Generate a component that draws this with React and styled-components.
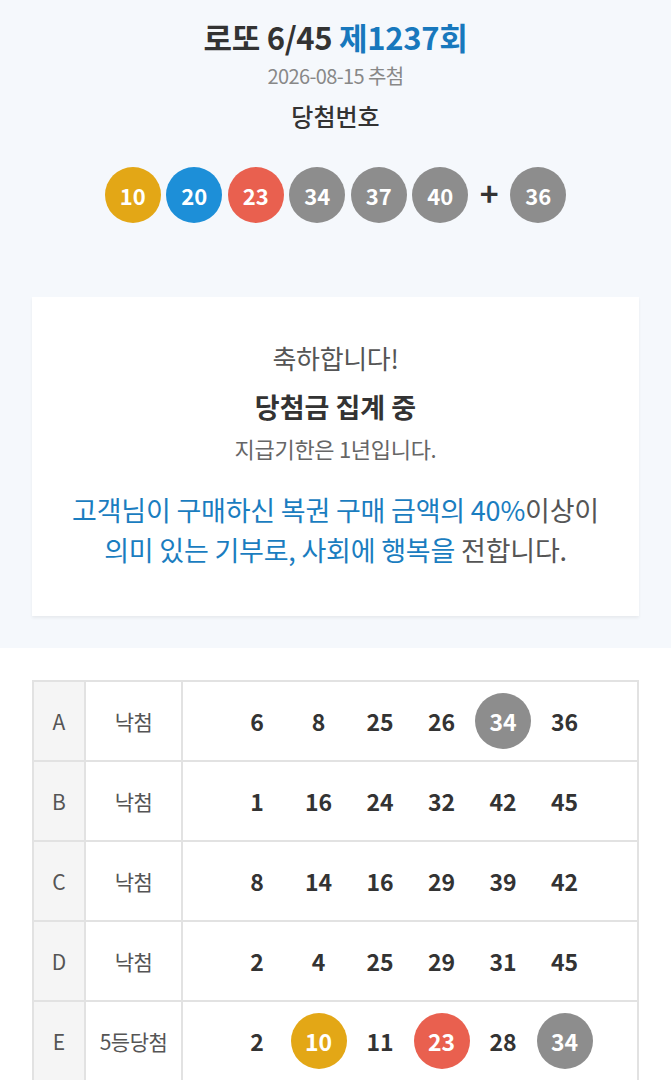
import React from 'react';
import styled, { createGlobalStyle } from 'styled-components';

const GlobalStyle = createGlobalStyle`
  html, body {
    margin: 0;
    padding: 0;
    background: #ffffff;
    font-family: 'Noto Sans CJK KR', 'Noto Sans', sans-serif;
    color: #333;
  }
`;

const winning = [10, 20, 23, 34, 37, 40];
const bonus = 36;

const games = [
  { id: 'A', result: '낙첨', nums: [6, 8, 25, 26, 34, 36] },
  { id: 'B', result: '낙첨', nums: [1, 16, 24, 32, 42, 45] },
  { id: 'C', result: '낙첨', nums: [8, 14, 16, 29, 39, 42] },
  { id: 'D', result: '낙첨', nums: [2, 4, 25, 29, 31, 45] },
  { id: 'E', result: '5등당첨', nums: [2, 10, 11, 23, 28, 34] }
];

const ballColor = n => {
  if (n <= 10) return '#e3a716';
  if (n <= 20) return '#1d8fd8';
  if (n <= 30) return '#e9604f';
  if (n <= 40) return '#8d8d8d';
  return '#9ac23c';
};

const App = () => (
  <Page>
    <GlobalStyle />
    <Top>
      <Title>
        로또 6/45 <Round>제1237회</Round>
      </Title>
      <DrawDate>2026-08-15 추첨</DrawDate>
      <Label>당첨번호</Label>
      <Balls>
        {winning.map(n => (
          <Ball key={n} color={ballColor(n)}>
            {n}
          </Ball>
        ))}
        <Plus>+</Plus>
        <Ball color={ballColor(bonus)}>{bonus}</Ball>
      </Balls>
      <Card>
        <Congrats>축하합니다!</Congrats>
        <Prize>당첨금 집계 중</Prize>
        <Deadline>지급기한은 1년입니다.</Deadline>
        <Donation>
          <Blue>고객님이 구매하신 복권 구매 금액의 40%</Blue>이상이
          <br />
          <Blue>의미 있는 기부로, 사회에 행복을</Blue> 전합니다.
        </Donation>
      </Card>
    </Top>
    <Bottom>
      <Table>
        {games.map(g => (
          <Row key={g.id}>
            <IdCell>{g.id}</IdCell>
            <ResultCell>{g.result}</ResultCell>
            <NumsCell>
              {g.nums.map(n =>
                winning.includes(n) ? (
                  <Hit key={n} color={ballColor(n)}>
                    {n}
                  </Hit>
                ) : (
                  <Num key={n}>{n}</Num>
                )
              )}
            </NumsCell>
          </Row>
        ))}
      </Table>
    </Bottom>
  </Page>
);

export default App;

// Styled Components

const Page = styled.div`
  width: 671px;
  min-height: 1080px;
  overflow: hidden;
`;

const Top = styled.section`
  background: #f5f8fc;
  display: flex;
  flex-direction: column;
  align-items: center;
  padding: 14px 32px 32px;
`;

const Title = styled.h1`
  margin: 0;
  font-size: 31px;
  font-weight: 700;
  line-height: 46px;
  color: #333;
  letter-spacing: -0.3px;
`;

const Round = styled.span`
  color: #1878bd;
`;

const DrawDate = styled.div`
  margin-top: 1px;
  font-size: 20px;
  line-height: 30px;
  color: #888;
  letter-spacing: -0.6px;
`;

const Label = styled.div`
  margin-top: 8px;
  font-size: 24px;
  font-weight: 500;
  line-height: 34px;
  color: #333;
`;

const Balls = styled.div`
  display: flex;
  align-items: center;
  gap: 5.5px;
  margin-top: 34px;
`;

const Ball = styled.span`
  width: 56px;
  height: 56px;
  border-radius: 50%;
  background: ${p => p.color};
  color: #fff;
  font-size: 22px;
  font-weight: 700;
  display: flex;
  align-items: center;
  justify-content: center;
`;

const Plus = styled.span`
  width: 31px;
  text-align: center;
  font-size: 32px;
  font-weight: 700;
  color: #333;
  line-height: 1;
  margin-top: -6px;
`;

const Card = styled.div`
  margin-top: 74px;
  width: 100%;
  box-sizing: border-box;
  background: #fff;
  box-shadow: 0 2px 3px rgba(0, 0, 0, 0.06);
  padding: 42px 20px 46px;
  display: flex;
  flex-direction: column;
  align-items: center;
  text-align: center;
`;

const Congrats = styled.div`
  font-size: 26px;
  line-height: 38px;
  color: #555;
  letter-spacing: -0.3px;
`;

const Prize = styled.div`
  margin-top: 11px;
  font-size: 27px;
  font-weight: 700;
  line-height: 38px;
  color: #333;
`;

const Deadline = styled.div`
  margin-top: 6px;
  font-size: 22px;
  line-height: 32px;
  color: #666;
  letter-spacing: -0.3px;
`;

const Donation = styled.p`
  margin: 26px 0 0;
  font-size: 27px;
  line-height: 40px;
  color: #555;
  letter-spacing: -0.2px;
`;

const Blue = styled.span`
  color: #1a7dc0;
`;

const Bottom = styled.section`
  background: #fff;
  padding: 32px 32px 0;
`;

const Table = styled.div`
  border: 2px solid #e2e2e2;
  border-bottom: none;
`;

const Row = styled.div`
  display: grid;
  grid-template-columns: 52px 97px 1fr;
  height: 80px;
  border-bottom: 2px solid #e2e2e2;
  box-sizing: border-box;
`;

const IdCell = styled.div`
  background: #f5f5f5;
  border-right: 2px solid #e2e2e2;
  display: flex;
  align-items: center;
  justify-content: center;
  font-size: 21px;
  color: #555;
`;

const ResultCell = styled.div`
  border-right: 2px solid #e2e2e2;
  display: flex;
  align-items: center;
  justify-content: center;
  font-size: 21px;
  color: #555;
  letter-spacing: -0.5px;
`;

const NumsCell = styled.div`
  display: flex;
  align-items: center;
  padding-left: 46px;
  gap: 5.5px;
`;

const Num = styled.span`
  width: 56px;
  height: 56px;
  display: flex;
  align-items: center;
  justify-content: center;
  font-size: 23px;
  font-weight: 700;
  color: #333;
`;

const Hit = styled(Num)`
  border-radius: 50%;
  background: ${p => p.color};
  color: #fff;
`;
